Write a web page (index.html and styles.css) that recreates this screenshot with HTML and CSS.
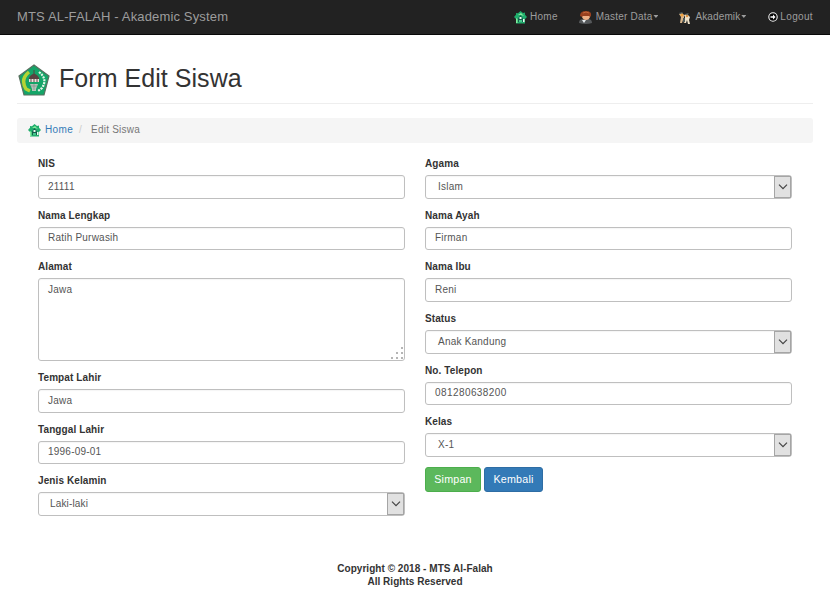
FILE: index.html
```html
<!DOCTYPE html>
<html lang="id">
<head>
<meta charset="utf-8">
<title>MTS AL-FALAH - Akademic System</title>
<link rel="stylesheet" href="styles.css">
</head>
<body>
<svg class="defs" width="0" height="0" aria-hidden="true">
  <symbol id="crest" viewBox="0 0 32 32">
    <path d="M16 1 31 12 26 31H6L1 12Z" fill="#14a568" stroke="#58705f" stroke-width="1.2"/>
    <path d="M11 8Q2 15 8 25l4 2" fill="none" stroke="#b5d334" stroke-width="3.400"/>
    <path d="M21 8q9 7 3 16l-4 3" fill="none" stroke="#e6f5e9" stroke-width="2.200" stroke-dasharray="2 1"/>
    <path d="M16 6v5M11 15q1-4 5-5 4 1 5 5z" fill="#5a4340" stroke="#5a4340"/>
    <path d="M11 15h10v3H11z" fill="#f1e5df"/>
    <path d="M13 15v3m3-3v3m3-3v3" stroke="#594b48"/>
    <path d="M12 20h8l-2 5v2h-4v-2z" fill="#b4c4b9"/>
    <path d="M16 20v6m-3-4h6" stroke="#7b9186" stroke-width=".7"/>
  </symbol>
  <symbol id="house" viewBox="0 0 13 13">
    <path d="M6.500 0 9 2l2-.5v2.200L13 6l-2 2v4.500H2V8L0 6l2-2.300V2l2 .2z" fill="#20ad6d"/>
    <path d="M2 7v5h1.500V8zm2-3 3-2 3 3-3-1z" fill="#83ed9b"/>
    <path d="M4 7.500 6.500 4 9 7.500V11H4z" fill="#155d4c"/>
    <path d="M5.500 6h2v2h-2zM9 8h1.500v3H9z" fill="#e8fff0"/>
    <path d="M5 9h3v2H5z" fill="#45c78b"/>
  </symbol>
</svg>
<nav class="navbar">
  <a class="brand">MTS AL-FALAH - Akademic System</a>
  <a class="nav-item nav-home"><svg width="13" height="13"><use href="#house"/></svg><span>Home</span></a>
  <a class="nav-item nav-master"><svg width="13" height="13" viewBox="0 0 13 13"><path d="M0 12q0-4 4-4h5q4 0 4 4-6 2-13 0z" fill="#55585a"/><path d="M3 9h4l-2 3z" fill="#e9eef0"/><path d="M3 4h8v2q-1 3-4 3T3 6z" fill="#efb087"/><path d="M1 5Q1 0 7 0t5 5L11 6 10 5H4L3 6z" fill="#99401f"/><path d="M4 2q3-2 6 0" fill="none" stroke="#c5683c"/></svg><span>Master Data</span><i class="caret"></i></a>
  <a class="nav-item nav-akademik"><svg width="13" height="13" viewBox="0 0 13 13"><path d="M1 3 4 2l2 2v3l2 5H6L5 9l-1 3H2L3 6z" fill="#d7b58b"/><path d="m6 4 3-1 3 3-1 3 1 4h-2L9 9 8 12H7V6z" fill="#efe2c9"/><circle cx="4" cy="4" r="1.500" fill="#f0a23f"/><circle cx="9" cy="5" r="1.300" fill="#dc9140"/><path d="m1 2 3-1 1 1-3 1zm6 1 3-1 1 1-3 1zM5 7h2v4H5z" fill="#4e5b5b"/></svg><span>Akademik</span><i class="caret"></i></a>
  <a class="nav-item nav-logout"><svg width="10" height="10" viewBox="0 0 10 10"><circle cx="5" cy="5" r="4.200" fill="#070707" stroke="#f4f4f4" stroke-width="1.100"/><path d="M2.500 4.200h2.500V2.600L7.500 5 5 7.400V5.800H2.500z" fill="#fff"/></svg><span>Logout</span></a>
</nav>
<main class="page">
  <h1 class="title"><svg width="32" height="32"><use href="#crest"/></svg><span>Form Edit Siswa</span></h1>
  <div class="breadcrumb"><svg width="13" height="13"><use href="#house"/></svg><a>Home</a><span class="slash">/</span><span class="current">Edit Siswa</span></div>
  <form class="columns">
    <div class="column">
      <div class="group"><label>NIS</label><div class="field">21111</div></div>
      <div class="group"><label>Nama Lengkap</label><div class="field">Ratih Purwasih</div></div>
      <div class="group"><label>Alamat</label><div class="field area">Jawa<svg class="grip" width="13" height="12" viewBox="0 0 13 12" fill="#b5b5b5"><path d="M10 0h2v2h-2zM5 5h2v2H5zm5 0h2v2h-2zM0 10h2v2H0zm5 0h2v2H5zm5 0h2v2h-2z"/></svg></div></div>
      <div class="group"><label>Tempat Lahir</label><div class="field">Jawa</div></div>
      <div class="group"><label>Tanggal Lahir</label><div class="field">1996-09-01</div></div>
      <div class="group"><label>Jenis Kelamin</label><div class="field select tight"><span>Laki-laki</span><i class="arrow"><svg width="10" height="6" viewBox="0 0 10 6"><path d="m1 .7 4 4 4-4"/></svg></i></div></div>
    </div>
    <div class="column">
      <div class="group"><label>Agama</label><div class="field select"><span>Islam</span><i class="arrow"><svg width="10" height="6" viewBox="0 0 10 6"><path d="m1 .7 4 4 4-4"/></svg></i></div></div>
      <div class="group"><label>Nama Ayah</label><div class="field">Firman</div></div>
      <div class="group"><label>Nama Ibu</label><div class="field">Reni</div></div>
      <div class="group"><label>Status</label><div class="field select"><span>Anak Kandung</span><i class="arrow"><svg width="10" height="6" viewBox="0 0 10 6"><path d="m1 .7 4 4 4-4"/></svg></i></div></div>
      <div class="group"><label>No. Telepon</label><div class="field phone">081280638200</div></div>
      <div class="group"><label>Kelas</label><div class="field select"><span>X-1</span><i class="arrow"><svg width="10" height="6" viewBox="0 0 10 6"><path d="m1 .7 4 4 4-4"/></svg></i></div></div>
      <div class="buttons"><a class="btn save">Simpan</a><a class="btn back">Kembali</a></div>
    </div>
  </form>
</main>
<footer class="footer">Copyright © 2018 - MTS Al-Falah<br>All Rights Reserved</footer>
</body>
</html>
```
FILE: styles.css
```css
* { box-sizing: border-box; }
body {
  margin: 0;
  height: 601px;
  overflow: hidden;
  background: #fff;
  color: #333;
  font: 10px/13px "Liberation Sans", Arial, sans-serif;
  letter-spacing: .22px;
}
svg { display: block; flex: none; }
.defs { position: absolute; }
.navbar {
  display: flex;
  align-items: center;
  height: 35px;
  padding: 0 17px 2px;
  background: #222;
  border-bottom: 1px solid #080808;
  color: #9d9d9d;
}
.brand { margin-right: auto; font-size: 13px; letter-spacing: .15px; }
.nav-item { display: flex; align-items: center; gap: 4px; }
.nav-item svg { margin-top: 2px; }
.nav-home { gap: 3px; letter-spacing: .3px; }
.nav-master { margin-left: 21px; letter-spacing: .2px; }
.nav-akademik { margin-left: 20px; letter-spacing: .12px; }
.nav-logout { margin-left: 22px; }
.caret { width: 5px; height: 3px; margin: 1px 0 0 -3px; background: #9d9d9d; clip-path: polygon(0 0, 100% 0, 50% 100%); }
.nav-logout { gap: 2px; letter-spacing: .35px; }
.page { padding: 0 17px; }
.title {
  display: flex;
  align-items: center;
  gap: 9px;
  height: 49px;
  margin: 20px 0 14px;
  padding: 0 0 0 1px;
  border-bottom: 1px solid #eee;
  font-size: 25px;
  font-weight: 400;
  line-height: 32px;
  letter-spacing: .05px;
}
.title svg { margin-top: 1px; }
.title span { margin-top: -3px; }
.breadcrumb {
  display: flex;
  align-items: center;
  height: 25px;
  padding: 0 11px 2px;
  border-radius: 3px;
  background: #f5f5f5;
}
.breadcrumb svg { margin-right: 4px; margin-top: 2px; }
.breadcrumb a { color: #337ab7; letter-spacing: .35px; }
.slash { margin: 0 9px 0 6px; color: #ccc; }
.current { color: #777; }
.columns {
  display: grid;
  grid-template-columns: 367px 367px;
  gap: 20px;
  padding: 14px 21px 0;
}
.group { margin-bottom: 10px; }
label { display: block; height: 18px; font-weight: 700; line-height: 14.500px; letter-spacing: .1px; }
.field {
  position: relative;
  display: flex;
  align-items: center;
  height: 23.650px;
  padding: 0 9px 1px;
  border: 1px solid #bfbfbf;
  border-radius: 3px;
  box-shadow: inset 0 1px 1px rgba(0, 0, 0, .04);
  color: #555;
}
.phone { letter-spacing: .42px; }
.area { height: 82.700px; align-items: flex-start; padding-top: 4px; }
.grip { position: absolute; right: 0; bottom: 1px; }
.select { padding: 0 0 0 12px; justify-content: space-between; }
.tight { padding-left: 11px; letter-spacing: .15px; }
.select span { padding-bottom: 1px; }
.arrow {
  display: flex;
  align-items: center;
  justify-content: center;
  width: 17px;
  height: 100%;
  border: 1px solid #a5a5a5;
  background: #e1e1e1;
}
.arrow path { fill: none; stroke: #444; stroke-width: 1.2; }
.buttons { display: flex; gap: 3px; }
.btn {
  height: 25px;
  border: 1px solid #4cae4c;
  border-radius: 3px;
  background: #5cb85c;
  color: #fff;
  font-size: 10.700px;
  line-height: 22px;
  text-align: center;
}
.save { width: 56px; }
.back { width: 59px; border-color: #2e6da4; background: #337ab7; }
.footer { margin-top: 36px; font-weight: 700; text-align: center; letter-spacing: .04px; }
```
